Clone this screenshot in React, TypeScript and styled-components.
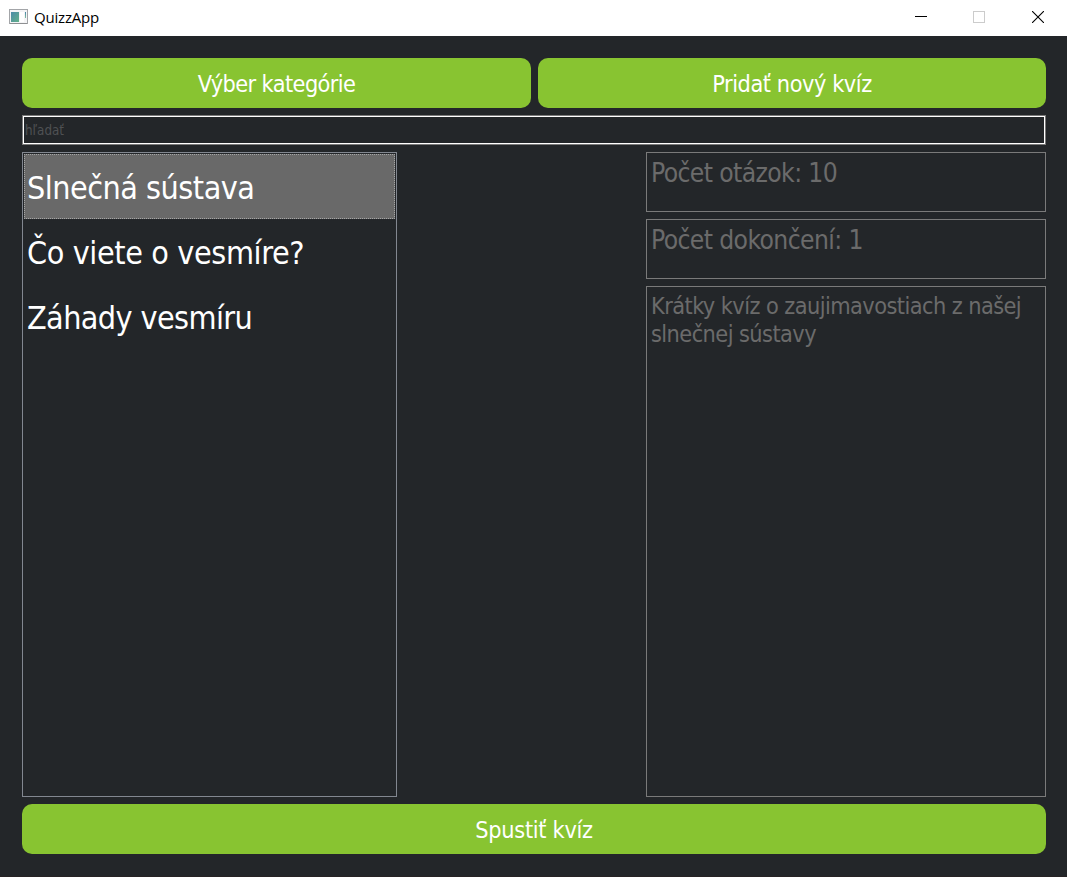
import React, { useState } from "react";
import styled, { createGlobalStyle } from "styled-components";

const GlobalStyle = createGlobalStyle`
  * { box-sizing: border-box; }
  body { margin: 0; background: #232629; }
`;

const Window = styled.div`
  display: flex;
  flex-direction: column;
  width: 1067px;
  height: 877px;
  background: #232629;
  border-bottom: 1px solid #272324;
  font-family: Tahoma, "DejaVu Sans Condensed", "DejaVu Sans", sans-serif;
  font-stretch: condensed;
  overflow: hidden;
`;

const TitleBar = styled.header`
  display: flex;
  align-items: center;
  height: 36px;
  flex: none;
  padding: 0 0 2px 9px;
  background: #fff;
  color: #000;
`;

const Title = styled.span`
  flex: 1;
  margin-left: 6px;
  font: 15px/20px "Segoe UI", "Open Sans", sans-serif;
  letter-spacing: -0.2px;
`;

const WindowButton = styled.button`
  display: flex;
  align-items: center;
  justify-content: center;
  width: 58px;
  height: 34px;
  padding: 0;
  border: 0;
  background: none;
`;

const CloseButton = styled(WindowButton)`
  width: 59px;
  padding-left: 1px;
`;

const Content = styled.main`
  display: flex;
  flex-direction: column;
  flex: 1;
  gap: 7px;
  padding: 22px 21px 22px 22px;
`;

const ButtonRow = styled.div`
  display: grid;
  grid-template-columns: 509px 508px;
  gap: 7px;
`;

const GreenButton = styled.button<{ $spacing: number }>`
  height: 50px;
  flex: none;
  padding: 2px 0 0;
  border: 0;
  border-radius: 10px;
  background: #88c431;
  color: #fff;
  font-family: inherit;
  font-stretch: inherit;
  font-size: 23.3px;
  line-height: 28px;
  letter-spacing: ${(p) => p.$spacing}px;
`;

const Search = styled.input`
  display: block;
  width: 100%;
  height: 30px;
  flex: none;
  padding: 0 0 0 2px;
  border: 1px solid #7a7a7a;
  box-shadow: inset 0 0 0 1px #fff;
  border-radius: 0;
  outline: none;
  background: transparent;
  color: #fff;
  font-family: inherit;
  font-stretch: inherit;
  font-size: 13.3px;
  &::placeholder {
    color: #4f5153;
    opacity: 1;
  }
`;

const Columns = styled.div`
  display: flex;
  justify-content: space-between;
  flex: 1;
  min-height: 0;
`;

const QuizList = styled.ul`
  width: 375px;
  margin: 0;
  padding: 1px;
  border: 1px solid #828790;
  list-style: none;
`;

const QuizItem = styled.li<{ $selected: boolean; $spacing: number }>`
  height: 65px;
  padding: 0 2px;
  border: 1px dotted ${(p) => (p.$selected ? "#a5a5a5" : "transparent")};
  background: ${(p) => (p.$selected ? "#696969" : "transparent")};
  background-clip: border-box;
  color: #fff;
  font-size: 32px;
  line-height: 67px;
  letter-spacing: ${(p) => p.$spacing}px;
  white-space: nowrap;
`;

const Details = styled.section`
  display: flex;
  flex-direction: column;
  gap: 7px;
  width: 400px;
`;

const Stat = styled.div<{ $spacing: number }>`
  height: 60px;
  padding: 4px;
  border: 1px solid #7a7a7a;
  color: #6b6b6b;
  font-size: 26.2px;
  line-height: 32px;
  letter-spacing: ${(p) => p.$spacing}px;
`;

const Description = styled.div`
  flex: 1;
  padding: 5px 4px;
  border: 1px solid #7a7a7a;
  color: #6b6b6b;
  font-size: 23.3px;
  line-height: 28px;
  letter-spacing: -0.57px;
`;

const AppIcon = () => (
  <svg width="19" height="16" viewBox="0 0 19 16" shapeRendering="crispEdges">
    <defs>
      <linearGradient id="screen" x1="0" y1="0" x2="1" y2="1">
        <stop offset="0" stopColor="#4b8aa8" />
        <stop offset="1" stopColor="#62b089" />
      </linearGradient>
      <linearGradient id="strip" x1="0" y1="0" x2="0" y2="1">
        <stop offset="0" stopColor="#4b84a8" />
        <stop offset="1" stopColor="#7fc0a0" />
      </linearGradient>
    </defs>
    <rect x="0.5" y="0.5" width="18" height="14" fill="#f4f4f6" stroke="#a3a5a8" />
    <rect x="1" y="14" width="17" height="1" fill="#8e9092" />
    <rect x="2" y="3" width="8" height="10" fill="url(#screen)" />
    <rect x="11" y="3" width="4" height="10" fill="#fff" />
    <rect x="16" y="3" width="1" height="6" fill="url(#strip)" />
  </svg>
);

const quizzes = [
  { name: "Slnečná sústava", spacing: -0.5 },
  { name: "Čo viete o vesmíre?", spacing: -0.38 },
  { name: "Záhady vesmíru", spacing: -0.6 },
];

export default function App() {
  const [selected, setSelected] = useState(0);
  return (
    <>
      <GlobalStyle />
      <Window>
        <TitleBar>
          <AppIcon />
          <Title>QuizzApp</Title>
          <WindowButton aria-label="Minimize">
            <svg width="12" height="12" shapeRendering="crispEdges">
              <path d="M0 5.5H12" stroke="#000" />
            </svg>
          </WindowButton>
          <WindowButton aria-label="Maximize" disabled>
            <svg width="12" height="12" shapeRendering="crispEdges">
              <rect x="0.5" y="0.5" width="11" height="11" fill="none" stroke="#ccc" />
            </svg>
          </WindowButton>
          <CloseButton aria-label="Close">
            <svg width="12" height="12">
              <path d="M0 0L12 12M12 0L0 12" stroke="#000" strokeWidth="1.1" />
            </svg>
          </CloseButton>
        </TitleBar>
        <Content>
          <ButtonRow>
            <GreenButton $spacing={-0.6}>Výber kategórie</GreenButton>
            <GreenButton $spacing={-0.45}>Pridať nový kvíz</GreenButton>
          </ButtonRow>
          <Search placeholder="hľadať" />
          <Columns>
            <QuizList>
              {quizzes.map((quiz, i) => (
                <QuizItem
                  key={quiz.name}
                  $selected={i === selected}
                  $spacing={quiz.spacing}
                  onClick={() => setSelected(i)}
                >
                  {quiz.name}
                </QuizItem>
              ))}
            </QuizList>
            <Details>
              <Stat $spacing={-0.6}>Počet otázok: 10</Stat>
              <Stat $spacing={-0.6}>Počet dokončení: 1</Stat>
              <Description>
                Krátky kvíz o zaujimavostiach z našej slnečnej sústavy
              </Description>
            </Details>
          </Columns>
          <GreenButton $spacing={-0.3}>Spustiť kvíz</GreenButton>
        </Content>
      </Window>
    </>
  );
}
